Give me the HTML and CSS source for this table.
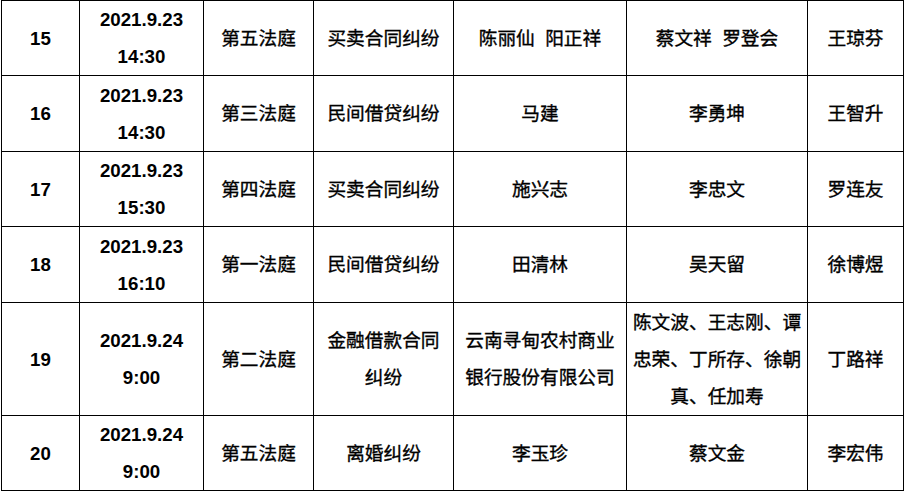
FILE: index.html
```html
<!DOCTYPE html>
<html lang="zh">
<head>
<meta charset="utf-8">
<title>开庭公告</title>
<link rel="stylesheet" href="styles.css">
</head>
<body>
<table class="sched">
  <colgroup>
    <col class="c1"><col class="c2"><col class="c3"><col class="c4"><col class="c5"><col class="c6"><col class="c7">
  </colgroup>
  <tbody>
    <tr class="r75">
      <td class="num">15</td><td class="num">2021.9.23<br>14:30</td><td>第五法庭</td><td>买卖合同纠纷</td><td>陈丽仙&nbsp;&nbsp;阳正祥</td><td>蔡文祥&nbsp;&nbsp;罗登会</td><td>王琼芬</td>
    </tr>
    <tr class="r76">
      <td class="num">16</td><td class="num">2021.9.23<br>14:30</td><td>第三法庭</td><td>民间借贷纠纷</td><td>马建</td><td>李勇坤</td><td>王智升</td>
    </tr>
    <tr class="r75">
      <td class="num">17</td><td class="num">2021.9.23<br>15:30</td><td>第四法庭</td><td>买卖合同纠纷</td><td>施兴志</td><td>李忠文</td><td>罗连友</td>
    </tr>
    <tr class="r76">
      <td class="num">18</td><td class="num">2021.9.23<br>16:10</td><td>第一法庭</td><td>民间借贷纠纷</td><td>田清林</td><td>吴天留</td><td>徐博煜</td>
    </tr>
    <tr class="r113">
      <td class="num">19</td><td class="num">2021.9.24<br>9:00</td><td>第二法庭</td><td>金融借款合同纠纷</td><td>云南寻甸农村商业银行股份有限公司</td><td>陈文波、王志刚、谭忠荣、丁所存、徐朝真、任加寿</td><td>丁路祥</td>
    </tr>
    <tr class="r74">
      <td class="num">20</td><td class="num">2021.9.24<br>9:00</td><td>第五法庭</td><td>离婚纠纷</td><td>李玉珍</td><td>蔡文金</td><td>李宏伟</td>
    </tr>
  </tbody>
</table>
</body>
</html>
```

FILE: styles.css
```css
html, body {
  margin: 0;
  padding: 0;
  background: #ffffff;
}

.sched {
  margin: 0 0 0 1px;
  border-collapse: collapse;
  table-layout: fixed;
  width: 903px;
  font-family: "Liberation Sans", "Noto Sans CJK SC", sans-serif;
  font-size: 18.7px;
  line-height: 37px;
  color: #000;
}

.c1 { width: 78px; }
.c2 { width: 124px; }
.c3 { width: 110px; }
.c4 { width: 140px; }
.c5 { width: 173px; }
.c6 { width: 181px; }
.c7 { width: 96px; }

.sched td {
  border: 1px solid #000;
  padding: 0 5px;
  text-align: center;
  vertical-align: middle;
  word-break: break-all;
  -webkit-text-stroke: 0.35px #000;
}

.sched td.num {
  font-weight: bold;
  -webkit-text-stroke: 0;
}

.r74 { height: 74px; }
.r75 { height: 75px; }
.r76 { height: 76px; }
.r113 { height: 113px; }
```
